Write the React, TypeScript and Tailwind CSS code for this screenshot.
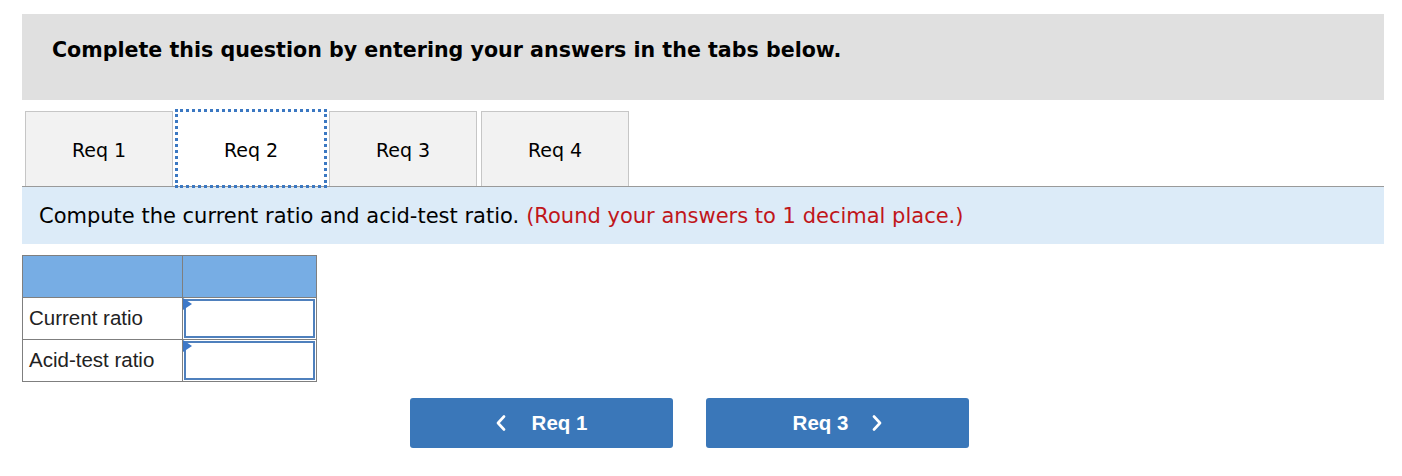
const tabs = ["Req 1", "Req 2", "Req 3", "Req 4"];

function AnswerCell() {
  return (
    <div className="relative h-full w-full p-px">
      <div className="h-full w-full border-2 border-[#4f80bd] bg-white" />
      <span className="absolute left-0 top-0 h-0 w-0 border-y-[6px] border-l-[9px] border-y-transparent border-l-[#3d78c8]" />
    </div>
  );
}

function Chevron({ dir }: { dir: "left" | "right" }) {
  return (
    <svg width="10" height="16" viewBox="0 0 10 16" fill="none" stroke="currentColor" strokeWidth="2.6" strokeLinecap="round" strokeLinejoin="round">
      {dir === "left" ? <polyline points="8,1.5 2,8 8,14.5" /> : <polyline points="2,1.5 8,8 2,14.5" />}
    </svg>
  );
}

export default function App() {
  return (
    <div className="min-h-[476px] bg-white pl-[22px] pr-[18px] pt-[14px] font-['DejaVu_Sans',Verdana,sans-serif] text-black">
      {/* Instruction header */}
      <div className="flex h-[86px] items-center bg-[#e0e0e0] pb-[13px] pl-[30px]">
        <h1 className="text-[20.6px] font-bold leading-none">
          Complete this question by entering your answers in the tabs below.
        </h1>
      </div>

      {/* Tabs */}
      <div className="mt-[11px] flex gap-1 border-b border-[#9a9a9a] pl-[3px]">
        {tabs.map((t, i) => (
          <div
            key={t}
            className={`flex h-[75px] w-[148px] items-center justify-center pt-[3px] text-[19px] ${
              i === 1
                ? "bg-white outline-dotted outline-[3px] -outline-offset-1 outline-[#3b78c2]"
                : "border border-b-0 border-[#c6c6c6] bg-[#f2f2f2]"
            }`}
          >
            {t}
          </div>
        ))}
      </div>

      {/* Question prompt */}
      <div className="flex h-[57px] items-center bg-[#dcebf8] pl-[17px] pt-[3px] text-[21px]">
        <span>Compute the current ratio and acid-test ratio.</span>
        <span className="ml-[7px] text-[#c0161a]">(Round your answers to 1 decimal place.)</span>
      </div>

      {/* Answer table */}
      <table className="mt-[11px] border-collapse font-['Liberation_Sans',Arial,sans-serif] text-[20.5px] text-[#222]">
        <tbody>
          <tr className="h-[42px] bg-[#77ade4]">
            <td className="w-[160px] border border-[#7f7f7f]" />
            <td className="w-[134px] border border-[#7f7f7f]" />
          </tr>
          {["Current ratio", "Acid-test ratio"].map((label) => (
            <tr key={label} className="h-[42px]">
              <td className="border border-[#7f7f7f] pl-[6px] leading-none">{label}</td>
              <td className="h-[42px] border border-[#7f7f7f] p-0">
                <AnswerCell />
              </td>
            </tr>
          ))}
        </tbody>
      </table>

      {/* Navigation */}
      <div className="mt-[16px] flex gap-[33px] pl-[388px] font-['Liberation_Sans',Arial,sans-serif]">
        <button className="flex h-[50px] w-[263px] items-center justify-center gap-[26px] rounded-[3px] bg-[#3a77b9] text-[20.5px] font-bold text-white">
          <Chevron dir="left" />
          Req 1
        </button>
        <button className="flex h-[50px] w-[263px] items-center justify-center gap-[24px] rounded-[3px] bg-[#3a77b9] text-[20.5px] font-bold text-white">
          Req 3
          <Chevron dir="right" />
        </button>
      </div>
    </div>
  );
}
